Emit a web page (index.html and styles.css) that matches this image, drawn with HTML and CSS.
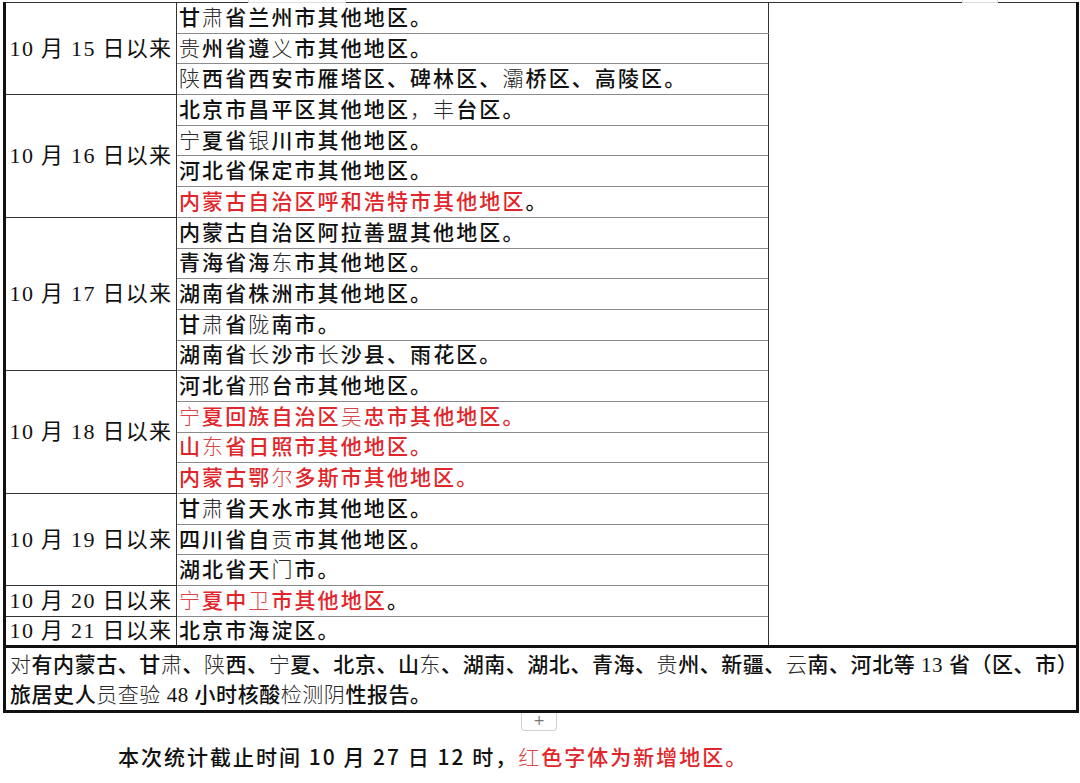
FILE: index.html
```html
<!DOCTYPE html>
<html lang="zh">
<head>
<meta charset="utf-8">
<link rel="stylesheet" href="styles.css">
</head>
<body>
<div class="topmarks"><span class="mark m1"></span><span class="mark m2"></span></div>
<table class="sheet">
  <colgroup><col class="c1"><col class="c2"><col class="c3"></colgroup>
  <tbody>
    <tr class="g"><td class="date" rowspan="3">10 月 15 日以来</td><td>甘<span class="l">肃</span>省兰州市其他地区。</td><td class="blank" rowspan="21"></td></tr>
    <tr><td><span class="l">贵</span>州省遵<span class="l">义</span>市其他地区。</td></tr>
    <tr><td><span class="l">陕</span>西省西安市雁塔区、碑林区、<span class="l">灞</span>桥区、高陵区。</td></tr>

    <tr class="g"><td class="date" rowspan="4">10 月 16 日以来</td><td>北京市昌平区其他地区<span class="l">，丰</span>台区。</td></tr>
    <tr><td><span class="l">宁</span>夏省<span class="l">银</span>川市其他地区。</td></tr>
    <tr><td>河北省保定市其他地区。</td></tr>
    <tr><td><span class="red">内蒙古自治区呼和浩特市其他地区</span>。</td></tr>

    <tr class="g"><td class="date" rowspan="5">10 月 17 日以来</td><td>内蒙古自治区阿拉善盟其他地区。</td></tr>
    <tr><td>青海省海<span class="l">东</span>市其他地区。</td></tr>
    <tr><td>湖南省株洲市其他地区。</td></tr>
    <tr><td>甘<span class="l">肃</span>省<span class="l">陇</span>南市。</td></tr>
    <tr><td>湖南省<span class="l">长</span>沙市<span class="l">长</span>沙县、雨花区。</td></tr>

    <tr class="g"><td class="date" rowspan="4">10 月 18 日以来</td><td>河北省<span class="l">邢</span>台市其他地区。</td></tr>
    <tr><td class="red"><span class="l">宁</span>夏回族自治区<span class="l">吴</span>忠市其他地区。</td></tr>
    <tr><td class="red">山<span class="l">东</span>省日照市其他地区。</td></tr>
    <tr><td class="red">内蒙古鄂<span class="l">尔</span>多斯市其他地区。</td></tr>

    <tr class="g"><td class="date" rowspan="3">10 月 19 日以来</td><td>甘<span class="l">肃</span>省天水市其他地区。</td></tr>
    <tr><td>四川省自<span class="l">贡</span>市其他地区。</td></tr>
    <tr><td>湖北省天<span class="l">门</span>市。</td></tr>

    <tr class="g"><td class="date">10 月 20 日以来</td><td><span class="red"><span class="l">宁</span>夏中<span class="l">卫</span>市其他地区</span>。</td></tr>
    <tr class="g"><td class="date">10 月 21 日以来</td><td>北京市海淀区。</td></tr>

    <tr class="note"><td colspan="3"><span class="l">对</span>有内蒙古、甘<span class="l">肃</span>、<span class="l">陕</span>西、<span class="l">宁</span>夏、北京、山<span class="l">东</span>、湖南、湖北、青海、<span class="l">贵</span>州、新疆、<span class="l">云</span>南、河北等 13 省（区、市）<br>旅居史人<span class="l">员查验</span> 48 小时核酸<span class="l">检测阴</span>性报告。</td></tr>
  </tbody>
</table>
<div class="addrow"><span class="plus">+</span></div>
<p class="foot">本次统计截止时间 10 月 27 日 12 时，<span class="red"><span class="l">红</span>色字体为新增地区。</span></p>
</body>
</html>
```

FILE: styles.css
```css
html, body {
  margin: 0;
  padding: 0;
  background: #fff;
}
body {
  width: 1080px;
  height: 783px;
  overflow: hidden;
  position: relative;
  font-family: "Liberation Serif", "Noto Sans CJK SC", serif;
  color: #111;
}
.topmarks {
  position: absolute;
  top: 0;
  left: 0;
  width: 1080px;
  height: 3px;
}
.mark {
  position: absolute;
  top: 0;
  height: 2px;
  border: 1px solid #ddd;
  border-top: none;
}
.m1 { left: 248px; width: 96px; }
.m2 { left: 962px; width: 34px; }

.sheet {
  margin: 2px 0 0 3px;
  width: 1073px;
  border-collapse: collapse;
  table-layout: fixed;
  border-top: 1px solid #222;
  border-left: 3px solid #111;
  border-right: 3px solid #111;
  border-bottom: 3px solid #111;
}
.c1 { width: 172px; }
.c2 { width: 592px; }
.c3 { width: 309px; }
.sheet td {
  padding: 0 0 0 2px;
  height: 30.7px;
  border: 1px solid #8a8a8a;
  border-left-color: #333;
  border-right-color: #333;
  font-size: 21px;
  line-height: 24px;
  letter-spacing: 2.1px;
  font-weight: 500;
  white-space: nowrap;
  vertical-align: middle;
  box-sizing: border-box;
}
.sheet tr.g td {
  border-top-color: #333;
}
.sheet td.date {
  text-align: center;
  padding: 0;
  font-size: 22px;
  font-weight: 400;
  letter-spacing: 1.3px;
  border-top-color: #333;
  border-bottom-color: #333;
}
.sheet td.blank {
  border-top-color: #222;
}
.sheet tr.note td {
  border-top: 3px solid #111;
  height: 61px;
  padding: 2px 0 0 4px;
  line-height: 30px;
  letter-spacing: 0.55px;
}
.l {
  font-weight: 300;
  color: #2a2a2a;
}
.red {
  color: #e0262a;
}
.red .l, .l.red {
  color: #d94447;
}
.addrow {
  display: flex;
  justify-content: center;
  margin-left: -2px;
}
.plus {
  display: block;
  width: 34px;
  height: 17px;
  border: 1px solid #cfcfcf;
  border-top: none;
  border-radius: 0 0 4px 4px;
  color: #777;
  font-family: "DejaVu Sans", sans-serif;
  font-size: 14px;
  line-height: 15px;
  text-align: center;
}
.foot {
  margin: 12px 0 0 118px;
  font-family: "Noto Sans CJK SC", sans-serif;
  font-size: 21px;
  line-height: 26px;
  letter-spacing: 2px;
  font-weight: 500;
  color: #111;
}
```
